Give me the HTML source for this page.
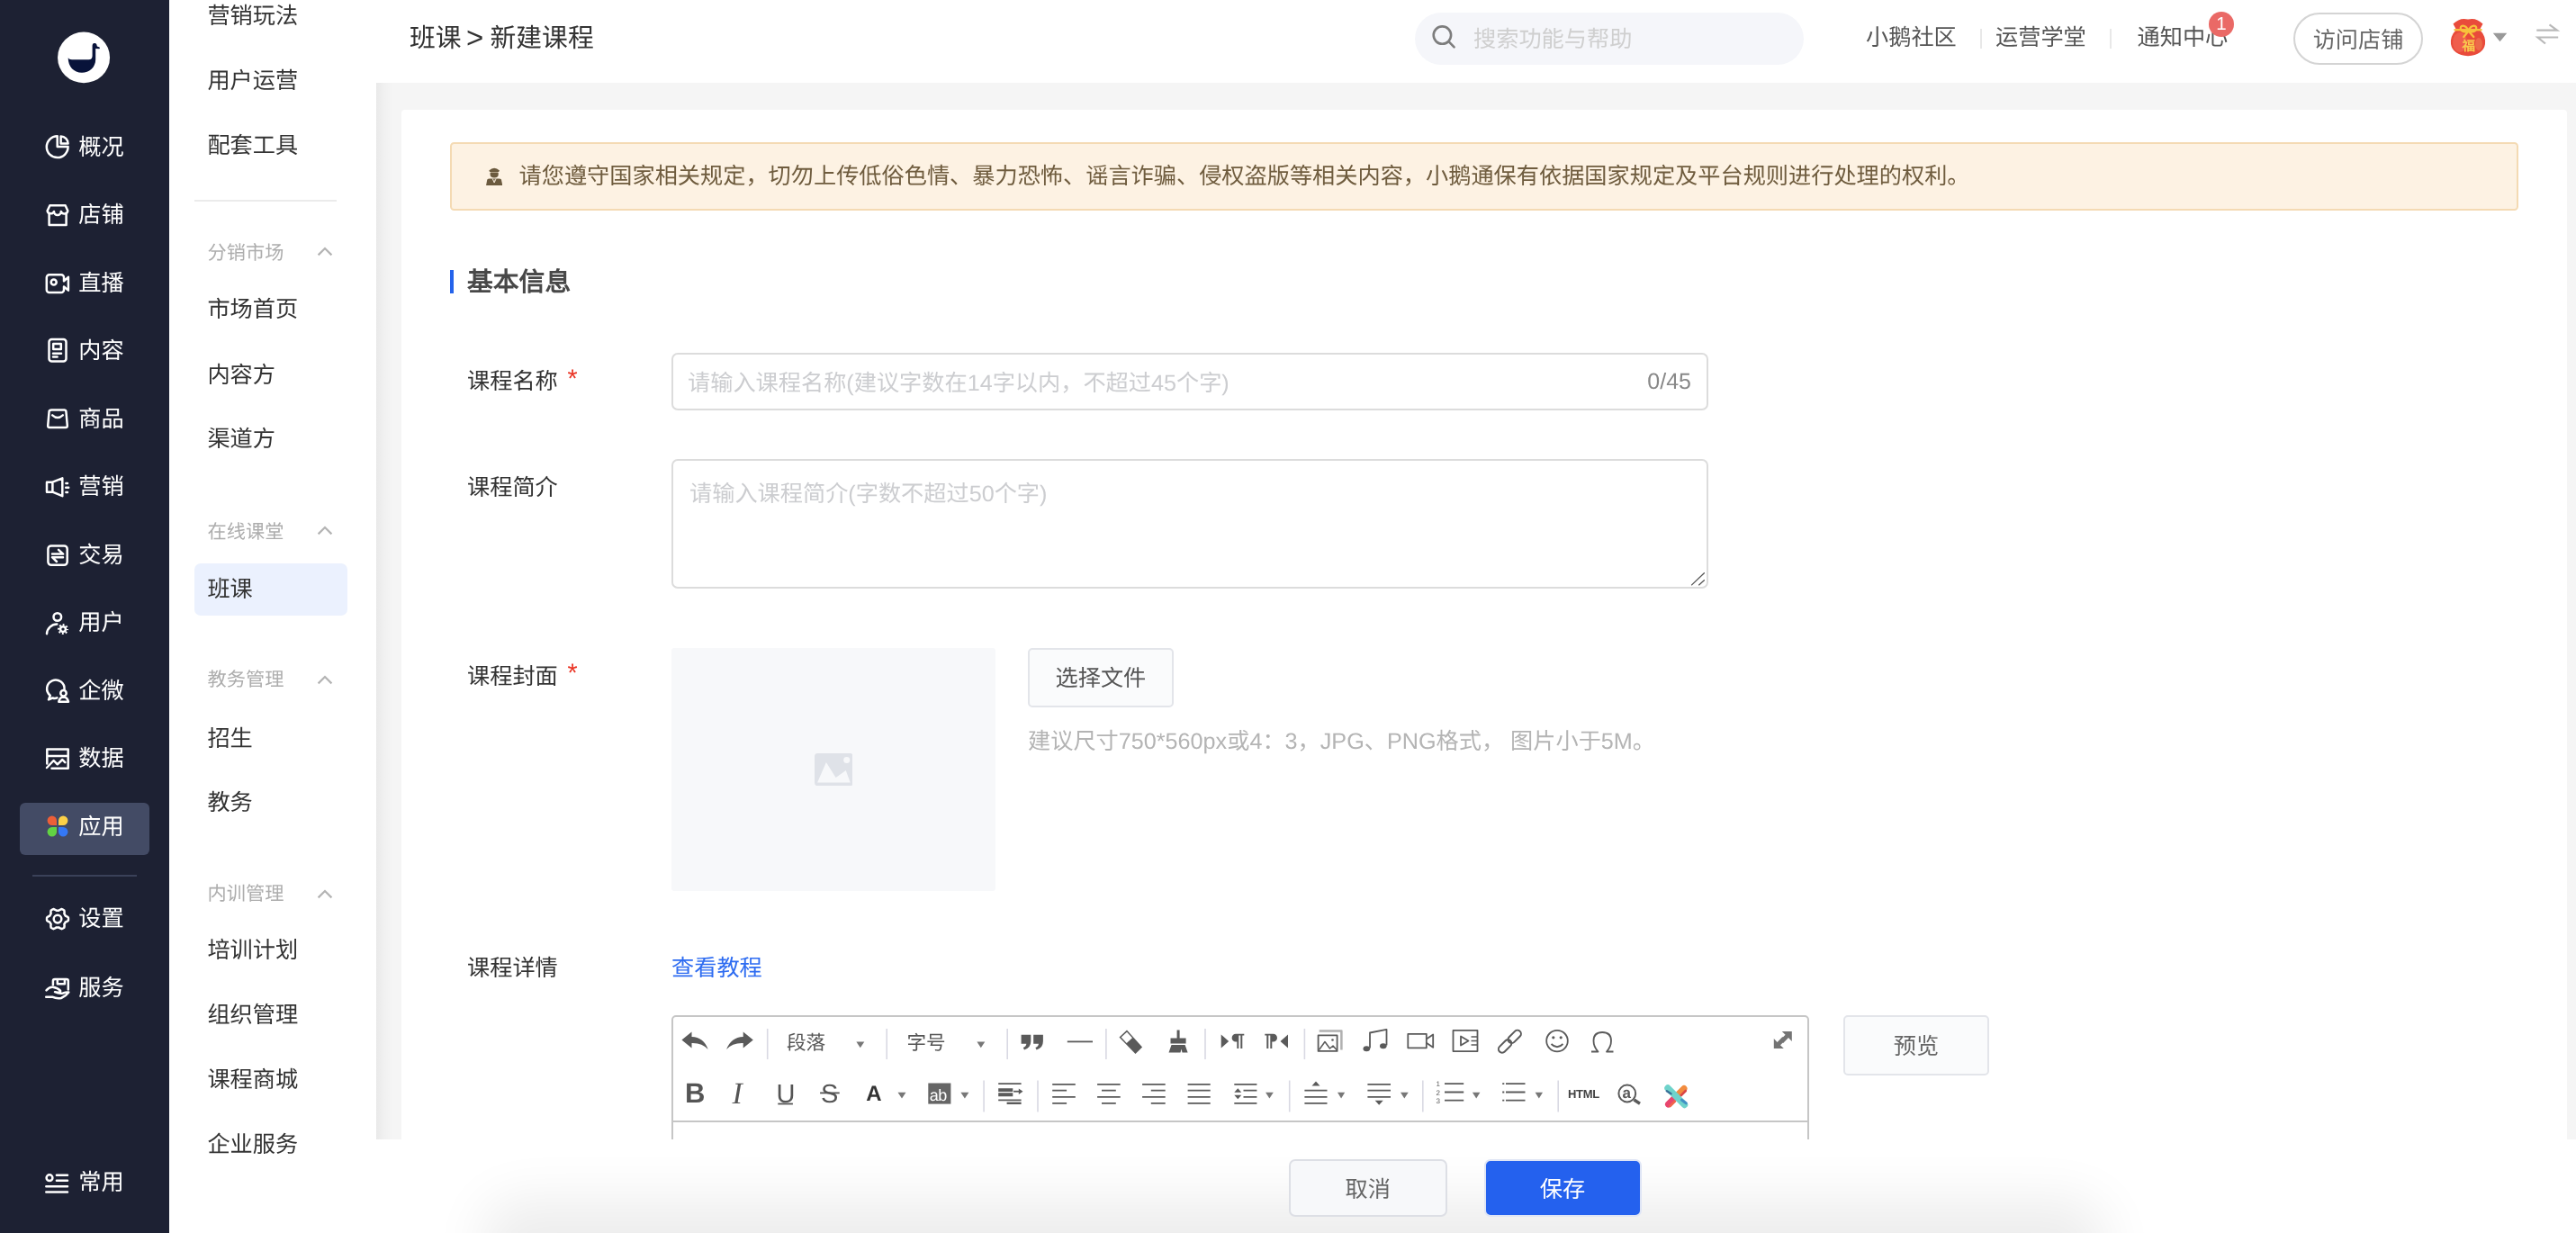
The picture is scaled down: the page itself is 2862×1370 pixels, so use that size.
<!DOCTYPE html>
<html lang="zh-CN">
<head>
<meta charset="utf-8">
<title>班课 - 新建课程</title>
<style>
*{box-sizing:border-box;margin:0;padding:0}
html,body{width:2862px;height:1370px;overflow:hidden;background:#fff}
body{font-family:"Liberation Sans",sans-serif;color:#333;position:relative;text-rendering:geometricPrecision}
.abs{position:absolute}
#nav,#sub,#hd,#card,#foot{will-change:transform}
/* ---------- left dark sidebar ---------- */
#nav{position:absolute;left:0;top:0;width:188px;height:1370px;background:#1d2133}
#nav .it{position:absolute;left:87.2px;height:40px;color:#fff;font-size:25.2px;line-height:40px;white-space:nowrap;margin-top:0.9px}
#nav .ic{position:absolute;fill:none;stroke:#fff;stroke-width:2.5;stroke-linecap:round;stroke-linejoin:round}
#nav .act{position:absolute;left:22px;top:892px;width:144px;height:58px;border-radius:6px;background:#434b65}
#nav .hr{position:absolute;left:36px;top:972px;width:116px;height:2px;background:#3a4159}
/* ---------- secondary sidebar ---------- */
#sub{position:absolute;left:188px;top:0;width:230px;height:1370px;background:#fff}
#sub .m{position:absolute;left:42.4px;height:40px;line-height:40px;font-size:25.2px;color:#333;white-space:nowrap;margin-top:1.5px}
#sub .g{position:absolute;left:42.6px;height:36px;line-height:37.4px;font-size:21.2px;color:#adadad;white-space:nowrap;margin-top:1.6px}
#sub .chev{position:absolute;margin-top:1.1px;left:164px;width:18px;height:11px;fill:none;stroke:#b4b4b4;stroke-width:2.2}
#sub .hr{position:absolute;left:28px;top:222px;width:158px;height:2px;background:#ebebeb}
#sub .sel{position:absolute;left:28px;top:626px;width:170px;height:58px;border-radius:7px;background:#ebf1fe}
/* ---------- header ---------- */
#hd{position:absolute;left:418px;top:0;width:2444px;height:92px;background:#fff}
#hd .bc{position:absolute;top:19px;height:44px;line-height:44px;font-size:28.8px;color:#333;white-space:nowrap;margin-top:2px}
#hd .search{position:absolute;left:1154px;top:14px;width:432px;height:58px;border-radius:29px;background:#f5f6fa}
#hd .search span{position:absolute;left:65px;top:8.5px;line-height:40px;font-size:25.2px;color:#cfcfcf;white-space:nowrap;margin-top:1.5px}
#hd .lnk{position:absolute;top:21px;height:40px;line-height:40px;font-size:25.2px;color:#555;white-space:nowrap;margin-top:1.1px}
#hd .sep{position:absolute;top:32px;width:2px;height:22px;background:#e8e8e8}
#hd .badge{position:absolute;left:2036px;top:12.8px;width:28px;height:28px;border-radius:14px;background:#ea6966;color:#fff;font-size:20.5px;line-height:28px;text-align:center}
#hd .visit{position:absolute;left:2130px;top:14px;width:144px;height:58px;border-radius:29px;border:2px solid #d4d4d4;font-size:25.2px;line-height:55px;text-align:center;color:#666;white-space:nowrap;padding-top:1.5px}
/* ---------- main ---------- */
#bg{position:absolute;left:418px;top:92px;width:2444px;height:1174px;background:#f5f5f5}
#bg .sh{position:absolute;left:0;top:0;width:18px;height:100%;background:linear-gradient(90deg,#e9e9e9,#f0f0f0 45%,#f5f5f5)}
#card{position:absolute;left:446px;top:121.75px;width:2406px;height:1144.25px;background:#fff;border-radius:4px 4px 0 0;overflow:hidden}
#ci{position:absolute;left:0;top:-0.75px;width:100%;height:100%}
#foot{position:absolute;left:418px;top:1266px;width:2444px;height:104px;background:#fff;overflow:hidden}
#foot .shadow{position:absolute;left:170px;top:117px;width:1700px;height:20px;border-radius:10px;box-shadow:0 0 60px 50px rgba(0,0,0,.075)}
.alert{position:absolute;left:54px;top:37.2px;width:2298px;height:75.5px;background:#fdf2e3;border:2px solid #f4dab3;border-radius:4.5px}
.alert span{position:absolute;left:74.5px;top:14.7px;line-height:40px;font-size:25.2px;color:#6f5c3e;white-space:nowrap;margin-top:0.9px}
.sect{position:absolute;left:54px;top:179px;width:4px;height:26px;background:#2563eb}
.sectt{position:absolute;left:73px;top:167.7px;line-height:46px;font-size:28.8px;font-weight:bold;color:#484848;white-space:nowrap;margin-top:1.7px}
.lab{position:absolute;left:73px;line-height:40px;font-size:25.2px;color:#333;white-space:nowrap;margin-top:1.5px}
.req{position:absolute;left:111.6px;top:-3.5px;color:#ea3323;font-size:28.5px;line-height:40px}
.inp{position:absolute;border:2px solid #dcdcdc;border-radius:7px;background:#fff}
.ph{position:absolute;line-height:40px;font-size:25.2px;color:#cccdd0;white-space:nowrap;margin-top:0.8px}
.cnt{position:absolute;left:1333px;width:100px;top:283px;line-height:40px;font-size:25px;color:#888;text-align:right}
.btn{position:absolute;border:2px solid #e3e5ea;border-radius:5px;background:#fafbfc;color:#555;font-size:25.2px;text-align:center;white-space:nowrap;padding-top:1.6px}
.hint{position:absolute;left:696px;top:681.4px;line-height:40px;font-size:25.2px;color:#b4b4b4;white-space:nowrap;margin-top:1.5px}
.lnk2{position:absolute;left:300px;top:933.5px;line-height:40px;font-size:25.2px;color:#2e6cf1;white-space:nowrap;margin-top:1.5px}
.ed{position:absolute;left:300px;top:1007.2px;width:1264px;height:200px;border:2px solid #c6c6c6;border-radius:5px 5px 0 0;background:#fff}
.edb{position:absolute;left:0;top:114.6px;width:100%;height:2px;background:#c6c6c6}
.tbt{position:absolute;margin-top:-0.8px;line-height:40px;font-size:21.6px;color:#555;white-space:nowrap}
</style>
</head>
<body>
<div id="bg"><div class="sh"></div></div>
<div id="card"><div id="ci">
<div class="alert"><span>请您遵守国家相关规定，切勿上传低俗色情、暴力恐怖、谣言诈骗、侵权盗版等相关内容，小鹅通保有依据国家规定及平台规则进行处理的权利。</span>
<svg class="abs" style="left:37.800px;top:25.500px;width:18.300px;height:20.200px" viewBox="0 0 18.300 20.200"><g fill="#6b5a3e"><path d="M3.300 3.600Q9.150 -2.200 15 3.600Q14.800 4.800 13.400 5.200H4.900Q3.500 4.800 3.300 3.600Z"/><path d="M4.600 5.900H13.700V8Q13.700 11.400 9.150 11.400Q4.600 11.400 4.600 8Z"/><path d="M0 20.200L1.300 13.600Q2 12.400 4 12.400H14.300Q16.300 12.400 17 13.600L18.300 20.200Z"/></g><path d="M7.200 12.600L9.150 17L11.100 12.600" stroke="#fdf2e3" stroke-width="0.900" fill="none"/><path d="M9.150 13.500V16" stroke="#fdf2e3" stroke-width="0.700"/><path d="M5 5.500H13.300" stroke="#a08f6e" stroke-width="0.700"/></svg>
</div>
<div class="sect"></div>
<div class="sectt">基本信息</div>

<div class="lab" style="top:281.500px">课程名称<span class="req">*</span></div>
<div class="inp" style="left:300px;top:271.1px;width:1152px;height:63.7px"></div>
<div class="ph" style="left:318px;top:284px">请输入课程名称(建议字数在14字以内，不超过45个字)</div>
<div class="cnt">0/45</div>

<div class="lab" style="top:399px">课程简介</div>
<div class="inp" style="left:300px;top:389.1px;width:1152px;height:143.7px"></div>
<div class="ph" style="left:320px;top:406.500px">请输入课程简介(字数不超过50个字)</div>
<svg class="abs" style="left:1430px;top:513px;width:18px;height:18px" viewBox="1430 513 18 18"><path d="M1433.600 528.900L1447.400 515.700M1441.600 528.900L1447.400 523.700" stroke="#555" stroke-width="1.300" fill="none" stroke-linecap="round"/></svg>

<div class="lab" style="top:609px">课程封面<span class="req">*</span></div>
<div class="abs" style="left:300px;top:598.9px;width:359.7px;height:270.3px;background:#f7f8fa;border-radius:3px"></div>
<svg class="abs" style="left:458.600px;top:715.800px;width:42.800px;height:36.200px" viewBox="0 0 42.800 36.200"><rect x="0" y="0" width="42.800" height="36.200" rx="3.500" fill="#dfe2e8"/><path d="M3.100 32.400L12.900 10.100L23.600 27L34.800 19L39.700 32.400Z" fill="#f7f8fa"/><circle cx="35.700" cy="7.600" r="3.500" fill="#f7f8fa"/></svg>
<div class="btn" style="left:696.2px;top:598.9px;width:161.4px;height:66px;line-height:61.4px">选择文件</div>
<div class="hint">建议尺寸750*560px或4：3，JPG、PNG格式， 图片小于5M。</div>

<div class="lab" style="top:933.500px">课程详情</div>
<div class="lnk2">查看教程</div>
<div class="btn" style="left:1602px;top:1007px;width:162px;height:67px;line-height:63px;color:#666">预览</div>
<div class="ed"><div class="edb"></div></div>
<svg class="abs" style="left:300px;top:1007px;width:1264px;height:118px" viewBox="746 1128 1264 118">
<g fill="#5a5a5a" stroke="none">
<rect x="851.9" y="1143.0" width="1.6" height="34.0" fill="#d9d9e3"/>
<rect x="984.4" y="1143.0" width="1.6" height="34.0" fill="#d9d9e3"/>
<rect x="1118.4" y="1143.0" width="1.6" height="34.0" fill="#d9d9e3"/>
<rect x="1228.1" y="1143.0" width="1.6" height="34.0" fill="#d9d9e3"/>
<rect x="1338.2" y="1143.0" width="1.6" height="34.0" fill="#d9d9e3"/>
<rect x="1448.6" y="1143.0" width="1.6" height="34.0" fill="#d9d9e3"/>
<rect x="1092.3" y="1200.5" width="1.6" height="35.0" fill="#d9d9e3"/>
<rect x="1152.2" y="1200.5" width="1.6" height="35.0" fill="#d9d9e3"/>
<rect x="1431.9" y="1200.5" width="1.6" height="35.0" fill="#d9d9e3"/>
<rect x="1580.0" y="1200.5" width="1.6" height="35.0" fill="#d9d9e3"/>
<rect x="1730.4" y="1200.5" width="1.6" height="35.0" fill="#d9d9e3"/>
<path d="M951.4 1157.6H960.3L955.8 1164.2Z" fill="#777"/>
<path d="M1085.4 1157.6H1094.3L1089.8 1164.2Z" fill="#777"/>
<path d="M997.5 1213.8H1006.5L1002.0 1220.4Z" fill="#777"/>
<path d="M1067.4 1213.8H1076.4L1071.9 1220.4Z" fill="#777"/>
<path d="M1406.1 1213.8H1414.8L1410.4 1220.4Z" fill="#777"/>
<path d="M1486.0 1213.8H1494.2L1490.1 1220.4Z" fill="#777"/>
<path d="M1556.0 1213.8H1564.7L1560.3 1220.4Z" fill="#777"/>
<path d="M1635.9 1213.8H1644.4L1640.2 1220.4Z" fill="#777"/>
<path d="M1705.6 1213.8H1714.0L1709.8 1220.4Z" fill="#777"/>
<path d="M757.4 1155.5L768.5 1146.5V1152Q782 1152.5 786.6 1166Q780 1158.500 768.5 1159V1164.500Z"/>
<path d="M836.8 1155.500L825.700 1146.500V1152Q812.200 1152.500 807.100 1166Q813.800 1158.500 825.700 1159V1164.500Z"/>
<path d="M1134.600 1149.700H1145.300V1157Q1145.300 1164.500 1138 1166.400L1136.800 1164Q1140.300 1162.500 1140.300 1159.700H1134.600ZM1148.200 1149.700H1158.900V1157Q1158.900 1164.500 1151.600 1166.400L1150.400 1164Q1153.900 1162.500 1153.900 1159.700H1148.200Z"/>
<rect x="1185.800" y="1156.500" width="28.200" height="1.800"/>
<path d="M1252 1144.600L1269.100 1163.500L1261.500 1171L1243.500 1152.500Z"/><path d="M1252 1146.800L1245.700 1152.600L1251.700 1159L1258 1153.200Z" fill="#fff"/>
<path d="M1307.600 1144.600H1310.600V1153.500H1317.600V1159.500H1300.500V1153.500H1307.600ZM1301.500 1161H1316.600L1319.600 1169.400H1313.500L1312.500 1165.500L1311.500 1169.400H1298.500Z"/>
<path d="M1356.700 1149.500L1365.200 1157L1356.700 1164.500Z"/><path d="M1373 1148.800H1382.300V1150.600H1380.300V1165.100H1378.300V1150.600H1376.300V1165.100H1374.300V1157.600H1373A4.400 4.400 0 0 1 1373 1148.800Z"/>
<path d="M1431 1149.500L1422.500 1157L1431 1164.500Z"/><path d="M1405.300 1148.800H1414.600A4.400 4.400 0 0 1 1414.600 1157.600H1413.300V1165.100H1411.300V1150.600H1409.300V1165.100H1407.300V1150.600H1405.300Z"/>
</g>
<g fill="none" stroke="#5a5a5a" stroke-width="1.800" stroke-linejoin="round">
<path d="M1465.700 1145.450H1490.400V1166.500" stroke="#b0b0b0" stroke-width="2.500"/><rect x="1464.600" y="1150.300" width="21" height="17.600"/><path d="M1465.500 1166.500L1472 1157.500L1477.500 1165L1481 1162L1485 1166.500" stroke-width="1.500"/><circle cx="1480.500" cy="1155.500" r="1.300" fill="#5a5a5a" stroke="none"/>
<path d="M1522 1164.500V1147.500L1540.500 1143.800V1161.500"/><ellipse cx="1518.300" cy="1165.200" rx="3.800" ry="3" fill="#5a5a5a" stroke="none"/><ellipse cx="1536.800" cy="1162.200" rx="3.800" ry="3" fill="#5a5a5a" stroke="none"/>
<rect x="1564.300" y="1148.800" width="20.500" height="15.500"/><path d="M1584.800 1154.500L1592.200 1149.500V1163.800L1584.800 1158.800"/>
<rect x="1614.500" y="1144.900" width="27" height="23.200"/><path d="M1623 1151.500V1161.500L1631.500 1156.500Z"/><path d="M1634.500 1152H1641M1634.500 1156.500H1641M1634.500 1161H1641" stroke-width="1.400"/>
<g transform="rotate(-45 1677.400 1157.200)" stroke-width="2"><rect x="1661.400" y="1153.200" width="17" height="8" rx="4"/><rect x="1676.400" y="1153.200" width="17" height="8" rx="4"/></g>
<circle cx="1730" cy="1156.600" r="11.800"/><path d="M1723.500 1160Q1730 1166.500 1736.500 1160"/><circle cx="1725.800" cy="1152.800" r="1.600" fill="#5a5a5a" stroke="none"/><circle cx="1734.200" cy="1152.800" r="1.600" fill="#5a5a5a" stroke="none"/>
<path d="M1768 1168.500H1775.500Q1770.500 1163 1770.500 1156.500Q1770.500 1147 1780.200 1147Q1790 1147 1790 1156.500Q1790 1163 1785 1168.500H1792.500"/>
</g>
<path fill="#747474" d="M1979.800 1145.900H1990.800V1156.900L1987 1153.100L1981.200 1158.900L1977.800 1155.500L1983.600 1149.700ZM1970.800 1154.100L1974.600 1157.900L1980.400 1152.100L1983.800 1155.500L1978 1161.300L1981.800 1165.100H1970.800Z"/>
<g font-family="Liberation Sans, sans-serif" fill="#555">
<text x="761" y="1224.800" font-size="31" font-weight="bold">B</text>
<text x="813.500" y="1225.800" font-size="34" font-style="italic" font-family="Liberation Serif, serif">I</text>
<text x="862.500" y="1224.800" font-size="29">U</text><rect x="864.300" y="1225.600" width="16.600" height="1.800"/>
<text x="912" y="1224.800" font-size="29">S</text><rect x="911.100" y="1213.500" width="21.600" height="1.800"/>
<text x="962.300" y="1222.700" font-size="24" font-weight="bold" fill="#333">A</text>
<rect x="1031.300" y="1203.500" width="25.100" height="23.100" fill="#666"/><text x="1032.800" y="1222.800" font-size="18" fill="#fff" letter-spacing="-0.500">ab</text>
<text x="1742" y="1220.200" font-size="13" font-weight="bold" fill="#444" letter-spacing="-0.300">HTML</text>
</g>
<g fill="none" stroke="#5a5a5a" stroke-width="1.800">
<path d="M1109.200 1204.200H1134.600M1109.200 1222.400H1134.600"/><path d="M1118.600 1225.800H1134.600" stroke-width="2.400"/><path d="M1109.200 1211.100H1125.300M1109.200 1216.300H1125.300" stroke-width="3.900"/><path d="M1126.100 1212.700H1135" stroke-width="1.800"/><path d="M1131.800 1209.500L1136.500 1212.700L1131.800 1216Z" fill="#5a5a5a" stroke="none"/>
<path d="M1169.2 1204.8H1194.8M1169.2 1211.7H1185.1M1169.2 1218.9H1194.8M1169.2 1225.8H1185.1"/>
<path d="M1219.1 1204.8H1244.7M1224.0 1211.7H1239.8M1219.1 1218.9H1244.7M1224.0 1225.8H1239.8"/>
<path d="M1269.1 1204.8H1294.7M1278.8 1211.7H1294.7M1269.1 1218.9H1294.7M1278.8 1225.8H1294.7"/>
<path d="M1319.6 1204.8H1344.7M1319.6 1211.7H1344.7M1319.6 1218.9H1344.7M1319.6 1225.8H1344.7"/>
<path d="M1371.300 1204.800H1396.400M1381.500 1211.700H1396.400M1381.500 1218.900H1396.400M1371.300 1225.800H1396.400"/><path d="M1371.300 1213.800L1375.300 1209.300L1379.300 1213.800ZM1371.300 1216.800L1375.300 1221.300L1379.300 1216.800Z" fill="#5a5a5a" stroke="none"/>
<path d="M1457.500 1206.500L1462 1201.500L1466.500 1206.500Z" fill="#5a5a5a" stroke="none"/><path d="M1449.400 1211.700H1474.500M1449.400 1218.900H1474.500M1449.400 1225.800H1474.500"/>
<path d="M1519.400 1204.800H1545M1519.400 1211.700H1545M1519.400 1218.900H1545"/><path d="M1527.700 1222.800L1532.200 1227.800L1536.700 1222.800Z" fill="#5a5a5a" stroke="none"/>
<path d="M1605 1204.100H1626.200M1605 1213.500H1626.200M1605 1222.700H1626.200"/>
<path d="M1673 1204.100H1694.500M1673 1213.500H1694.500M1673 1222.700H1694.500"/><path d="M1669.200 1204.100H1671.300M1669.200 1213.500H1671.300M1669.200 1222.700H1671.300"/>
<circle cx="1807.800" cy="1215" r="9.400" stroke-width="2"/><path d="M1815.500 1222L1822 1226.200" stroke-width="3.400"/>
</g>
<g fill="#5a5a5a" style="font-family:'Liberation Sans',sans-serif"><text x="1595.500" y="1207.300" font-size="8">1</text><text x="1595.500" y="1216.600" font-size="8">2</text><text x="1595.500" y="1225.900" font-size="8">3</text><text x="1802.600" y="1220" font-size="17" style="font-family:'Liberation Sans',sans-serif;font-weight:bold">a</text></g>
<g stroke-linecap="round" fill="none"><path d="M1871 1209.500L1864.500 1216" stroke="#f28c3e" stroke-width="7"/><path d="M1872.800 1212L1867.500 1217.300" stroke="#d94545" stroke-width="2.600"/><path d="M1853.500 1227L1859.500 1221" stroke="#e8456e" stroke-width="7"/><path d="M1855.500 1229L1861 1223.500" stroke="#f0654c" stroke-width="2.600"/><path d="M1853 1209L1871.500 1227.500" stroke="#6fd3cb" stroke-width="7.400"/><path d="M1851.800 1212.200L1856.500 1215.300" stroke="#2f5f8f" stroke-width="2.400" opacity="0.850"/><path d="M1868.500 1222.200L1873.300 1225.800" stroke="#3b86c4" stroke-width="3" opacity="0.850"/></g>
</svg>
<div class="tbt" style="left:428px;top:1019px">段落</div>
<div class="tbt" style="left:561.5px;top:1019px">字号</div>
</div></div>
<div id="hd">
<div class="bc" style="left:37px">班课</div>
<div class="bc" style="left:100px;font-size:33px;margin-top:0.5px">&gt;</div>
<div class="bc" style="left:126.5px">新建课程</div>
<div class="search"><span>搜索功能与帮助</span></div>
<div class="lnk" style="left:1655px">小鹅社区</div>
<div class="sep" style="left:1782px"></div>
<div class="lnk" style="left:1799px">运营学堂</div>
<div class="sep" style="left:1926px"></div>
<div class="lnk" style="left:1956.5px">通知中心</div>
<div class="badge">1</div>
<div class="visit">访问店铺</div>
<svg class="abs" style="left:1154px;top:0;width:1290px;height:92px" viewBox="1572 0 1290 92">
<g fill="none" stroke="#7d7d7d" stroke-width="2.6" stroke-linecap="round"><circle cx="1602.4" cy="39.1" r="9.7"/><path d="M1609.5 46.2L1615.6 52.3"/></g>
<!-- lucky bag avatar -->
<path d="M2725.5 26.5Q2733 19 2742 21.5Q2751 19 2758.5 26.5L2755 33Q2762 40 2761 49Q2759 61 2742 62.3Q2725 61 2723 49Q2722 40 2729 33Z" fill="#e94b3b"/>
<ellipse cx="2733" cy="47" rx="8" ry="11" fill="#f4705c" opacity="0.55"/><ellipse cx="2754" cy="49" rx="4" ry="7" fill="#f08a58" opacity="0.5"/>
<path d="M2726.500 33.200H2757.500" stroke="#f7c13c" stroke-width="2.300" fill="none"/>
<path d="M2742.500 34C2739 26.500 2732.500 27.500 2734 32.500C2735.200 36.300 2740 35.500 2742.500 34C2746 26.500 2752.500 27.500 2751 32.500C2749.800 36.300 2745 35.500 2742.500 34M2742.500 34.500L2737.300 41M2742.500 34.500L2748.300 41" stroke="#f7c13c" stroke-width="2.300" fill="none" stroke-linecap="round"/>
<text x="2742.800" y="56" font-size="14.500" font-weight="bold" text-anchor="middle" fill="#f9cc4e" font-family="Liberation Serif, serif">福</text>
<path d="M2769.800 36.800H2785.300L2777.500 46.200Z" fill="#999"/>
<g fill="none" stroke="#b9b9b9" stroke-width="2.200"><path d="M2818.300 33.700H2841L2832.500 27.400M2842.200 41.500H2819.500L2828 48.500"/></g>
</svg>
</div>
<div id="sub">
<div class="hr"></div>
<div class="sel"></div>
<div class="m" style="top:-3.5px">营销玩法</div>
<div class="m" style="top:68.5px">用户运营</div>
<div class="m" style="top:140.7px">配套工具</div>
<div class="g" style="top:261.5px">分销市场</div>
<svg class="chev" style="top:273.0px" viewBox="0 0 18 11"><path d="M1.6 9.4L9 2L16.4 9.4"/></svg>
<div class="m" style="top:322.8px">市场首页</div>
<div class="m" style="top:395.0px">内容方</div>
<div class="m" style="top:466.7px">渠道方</div>
<div class="g" style="top:571.1px">在线课堂</div>
<svg class="chev" style="top:583.3px" viewBox="0 0 18 11"><path d="M1.6 9.4L9 2L16.4 9.4"/></svg>
<div class="m" style="top:633.0px">班课</div>
<div class="g" style="top:735.1px">教务管理</div>
<svg class="chev" style="top:748.9px" viewBox="0 0 18 11"><path d="M1.6 9.4L9 2L16.4 9.4"/></svg>
<div class="m" style="top:799.0px">招生</div>
<div class="m" style="top:870.5px">教务</div>
<div class="g" style="top:973.7px">内训管理</div>
<svg class="chev" style="top:986.5px" viewBox="0 0 18 11"><path d="M1.6 9.4L9 2L16.4 9.4"/></svg>
<div class="m" style="top:1034.0px">培训计划</div>
<div class="m" style="top:1106.7px">组织管理</div>
<div class="m" style="top:1178.0px">课程商城</div>
<div class="m" style="top:1250.0px">企业服务</div>
</div>
<div id="nav">
<div class="act"></div>
<div class="hr"></div>
<div class="it" style="top:143.0px">概况</div>
<div class="it" style="top:218.5px">店铺</div>
<div class="it" style="top:294.0px">直播</div>
<div class="it" style="top:369.5px">内容</div>
<div class="it" style="top:445.0px">商品</div>
<div class="it" style="top:520.5px">营销</div>
<div class="it" style="top:596.0px">交易</div>
<div class="it" style="top:671.5px">用户</div>
<div class="it" style="top:747.0px">企微</div>
<div class="it" style="top:822.5px">数据</div>
<div class="it" style="top:898.0px">应用</div>
<div class="it" style="top:1000.5px">设置</div>
<div class="it" style="top:1077.0px">服务</div>
<div class="it" style="top:1293.0px">常用</div>
<svg class="ic" style="left:0;top:0;width:188px;height:1370px" viewBox="0 0 188 1370">
<ellipse cx="93.050" cy="63.900" rx="29" ry="28.300" fill="#fff" stroke="none"/>
<path fill="#08133a" stroke="none" d="M75.7 64.3Q76.5 66.2 80 66.2H98.5Q102.6 66.2 102.6 62V50.5A2.5 2.5 0 0 1 107.3 49.3L107.9 51.6L110.6 52.5Q111.5 53.5 110.3 54.3L106.2 54.1V66C106.2 75 99 80.8 91 80.8C82 80.8 75.7 74 75.7 64.3Z"/>
<!-- overview -->
<path d="M63.7 151.3V163.1H75.6A11.9 11.9 0 1 1 63.7 151.3Z"/>
<path d="M67.6 159.6V151.5A8.1 8.1 0 0 1 75.6 159.6Z"/>
<!-- store -->
<path d="M55.4 228.3H72.6L75.3 234.2A3.9 3.9 0 0 1 67.8 235A3.9 3.9 0 0 1 60 235A3.9 3.9 0 0 1 52.6 234.2Z"/>
<path d="M54.6 237.5V250H73.6V237.5"/>
<!-- live -->
<path d="M71 312.3V308.2a3 3 0 0 0-3-3H54.8a3 3 0 0 0-3 3V321.9a3 3 0 0 0 3 3H68a3 3 0 0 0 3-3V318.5L75.9 322.6V307.8L71 312.3"/>
<circle cx="59.7" cy="313.5" r="3"/>
<!-- content -->
<rect x="54.5" y="377.1" width="19" height="24.3" rx="3"/>
<rect x="59.2" y="382" width="8.6" height="6.1"/>
<path d="M59 392.8H68M59 396.6H63.6"/>
<!-- goods -->
<path d="M57.3 455.5H71.7Q73.2 455.5 73.4 457L74.8 472.8Q75 474.9 73 474.9H55Q53 474.9 53.2 472.8L54.6 457Q54.8 455.5 57.3 455.5Z"/>
<path d="M58.2 461.3Q64 466.6 69.8 461.3"/>
<!-- marketing -->
<path d="M52 535.7H58.4V546.7H52ZM58.4 535.7L69.3 531.3V551.2L58.4 546.7"/>
<path d="M73.4 537H75M73.2 541.8H76.2M73.4 547H75"/>
<!-- trade -->
<rect x="53.4" y="606.4" width="21.3" height="21.4" rx="3.5"/>
<path d="M58 615.6H70.2L65 610.8M70 619.2H58L63 624"/>
<!-- user -->
<circle cx="63.8" cy="685.5" r="4.3"/>
<path d="M52 704.2A11.3 11.3 0 0 1 63.3 693.6"/>
<circle cx="70" cy="699.1" r="2.9" stroke-width="2.4"/>
<circle cx="70" cy="699.1" r="5" stroke-width="2" stroke-dasharray="1.9 2.03" stroke-linecap="butt" stroke-dashoffset="0.95"/>
<!-- wecom -->
<path d="M71.5 766A9.7 9.7 0 1 0 55.8 772.8L54 777.4L58.4 775.5Q61 776.6 63.4 775.4"/>
<circle cx="70.5" cy="770.2" r="3.2"/>
<path d="M65.3 779.7Q66 774.6 70.5 774.4Q75 774.6 76 779.7Z"/>
<!-- data -->
<path d="M52.3 848.5V832.4H75.7V853.8H57.5M52.3 839.9H75.7M52 853L59.6 845L63.8 849.3L69.3 844L72.3 847.2"/>
<!-- apps -->
<g stroke="none">
<path fill="#ec5f38" d="M57.8 906.6h0a5.2 5.2 0 0 1 5.2 5.2v5.2h-5.2a5.2 5.2 0 0 1 0-10.4z"/>
<path fill="#fbd048" d="M70.2 906.6h0a5.2 5.2 0 0 1 0 10.4h-5.2v-5.2a5.2 5.2 0 0 1 5.2-5.2z"/>
<path fill="#62d343" d="M57.8 919.1h5.2v5.2a5.2 5.2 0 1 1-5.2-5.2z"/>
<path fill="#3478f6" d="M65 919.1h5.2a5.2 5.2 0 1 1-5.2 5.2z"/>
</g>
<!-- settings -->
<path d="M76.0 1021.1L75.9 1022.7L74.3 1023.9L72.6 1024.7L72.1 1025.8L71.4 1026.8L71.6 1028.7L71.3 1030.7L70.0 1031.5L68.6 1032.2L66.8 1031.4L65.2 1030.4L64.0 1030.5L62.8 1030.4L61.2 1031.4L59.4 1032.2L58.0 1031.5L56.7 1030.7L56.4 1028.7L56.6 1026.8L55.9 1025.8L55.4 1024.7L53.7 1023.9L52.1 1022.7L52.0 1021.1L52.1 1019.5L53.7 1018.3L55.4 1017.5L55.9 1016.4L56.6 1015.4L56.4 1013.5L56.7 1011.5L58.0 1010.7L59.4 1010.0L61.2 1010.8L62.8 1011.8L64.0 1011.8L65.2 1011.8L66.8 1010.8L68.6 1010.0L70.0 1010.7L71.3 1011.5L71.6 1013.5L71.4 1015.4L72.1 1016.4L72.6 1017.5L74.3 1018.3L75.9 1019.5Z"/>
<circle cx="64" cy="1021.1" r="4.3"/>
<!-- service -->
<path d="M58.9 1094.2V1090Q58.9 1088 61 1088H73.8Q75.8 1088 75.8 1090V1099.4M63.8 1088V1093.2H71.9V1088"/>
<path d="M51.5 1100.3Q55 1096.5 58.5 1096.8Q64 1097.5 67 1100.6Q67.8 1103.6 61 1102.2Q66 1104.6 70 1103.5Q74 1102 76.3 1102.5Q73 1107 68 1109Q63 1110 58 1107.7H51.2"/>
<!-- common -->
<circle cx="55" cy="1308.7" r="3.4"/>
<path d="M62.9 1305.7H75M62.9 1311.8H75M51.3 1318.3H75M51.3 1324.5H75"/>
</svg>
</div>
<div id="foot"><div class="shadow"></div>
<div class="btn" style="left:1014px;top:22px;width:175.5px;height:63.5px;line-height:61.4px;color:#666;background:#f7f8fa;border-color:#dddfe5;border-radius:7px">取消</div>
<div class="btn" style="left:1230.5px;top:22px;width:175px;height:63.5px;line-height:61.4px;color:#fff;background:#2461ee;border-color:#dfe5f5;border-radius:7px">保存</div>
</div>
</body>
</html>
